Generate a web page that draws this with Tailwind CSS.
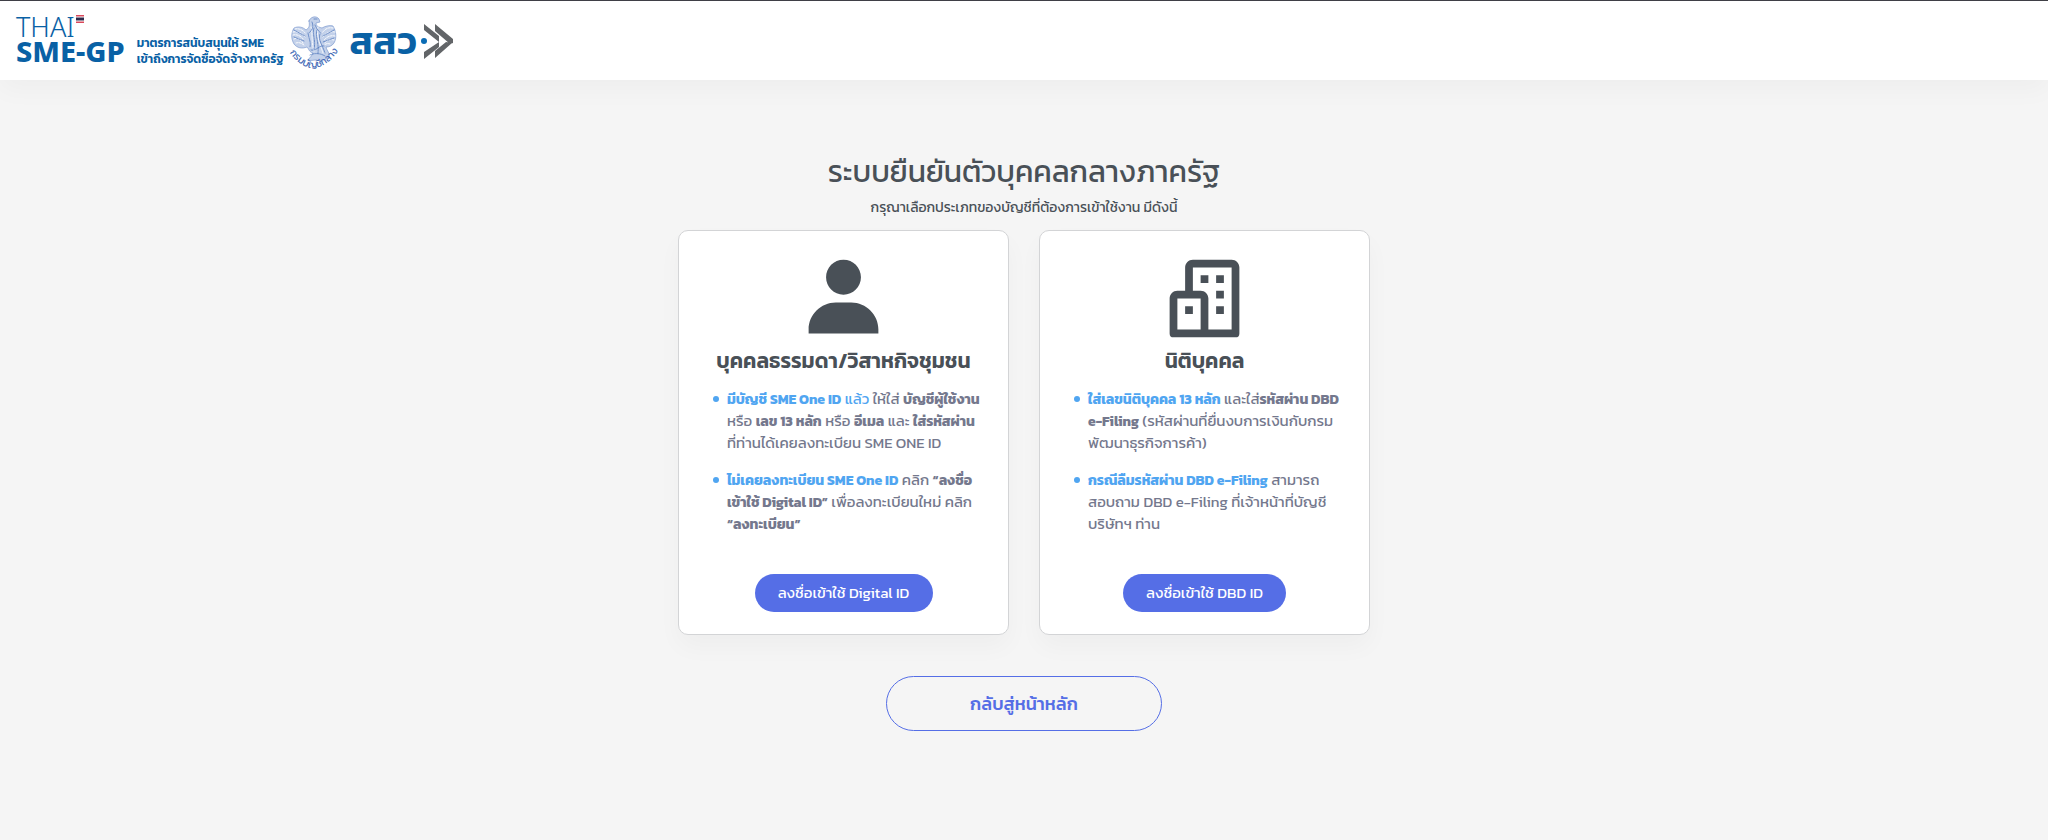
<!DOCTYPE html>
<html lang="th">
<head>
  <meta charset="UTF-8">
  <meta name="viewport" content="width=device-width, initial-scale=1.0">
  <title>THAI SME-GP</title>
  <script src="https://cdn.jsdelivr.net/npm/@tailwindcss/browser@4"></script>
</head>
<body class="min-h-screen bg-[#f5f5f5] font-[Kanit,'Noto_Sans_Thai',Roboto,sans-serif] text-[#495057]">
  <header class="flex h-20 items-center border-t border-[#3f3f46] bg-white pl-4 shadow-[0_10px_24px_rgba(0,0,0,0.03)]">
    <a href="#" class="flex items-end gap-3 text-[#0961a5]">
      <span class="flex flex-col pb-1">
        <span class="flex items-start gap-px">
          <span class="font-['Noto_Sans'] text-[27px] leading-6 font-light">THAI</span>
          <svg class="h-2 w-2" viewBox="0 0 8 8">
            <path fill="#d9485a" d="M0 0h8v8H0z"/>
            <path fill="#fff" d="M0 1.500h8v5H0z"/>
            <path fill="#2d2a4a" d="M0 2.500h8v3H0z"/>
          </svg>
        </span>
        <span class="font-['Noto_Sans'] text-[29px] leading-6 font-extrabold">SME-GP</span>
      </span>
      <span class="text-xs leading-4 font-semibold whitespace-nowrap">มาตรการสนับสนุนให้ SME<br>เข้าถึงการจัดซื้อจัดจ้างภาครัฐ</span>
    </a>
    <a href="#" class="ml-1.5" aria-label="กรมบัญชีกลาง">
      <svg class="h-14 w-12 overflow-visible" viewBox="0 0 48 56" fill="none" stroke="#6f8fc9" stroke-linecap="round">
        <path fill="#c3d1ea" stroke-width="0.6" d="M19 8c1-4 7-6 10-2l1 3-4 1c0 3 2 4 6 5 3-2 8-3 11-2 3 5 4 12 1 17-2 3-5 4-8 4 1 4 4 6 3 10-3 3-9 4-13 3-3 0-5 1-8 0 2-3 4-4 5-7-4-1-4-4-6-6-5 2-10 1-13-3-3-5-3-11 0-16 4-2 9-1 12 2 3-2 4-4 3-9z"/>
        <path stroke="#fff" stroke-width="0.9" stroke-dasharray="2 1.200" d="M5 16c4-1 8 1 11 5M3 19c5-1 9 1 12 5M3 22c4-1 8 1 11 5M4 26c4-2 7 1 9 4M6 30c3-1 5 0 8 2M43 15c-5-1-8 1-11 5M45 19c-5-1-9 1-12 5M45 23c-5-1-8 1-11 4M44 27c-4-1-7 0-9 3M40 31c-3-1-4 0-6 1M21 14c2 8 0 14 3 24M28 14c-2 8 1 14 5 26"/>
        <path stroke="#5279bd" stroke-width="0.8" stroke-dasharray="1.500 1" d="M24 6l3 0M22 9c2 5 0 8-3 11M25 12c2 4 3 6 6 8M18 20c1 6 3 9 2 14M24 15c-2 6 2 12 0 21M27 17c-2 6 2 12 1 23M30 21c-2 6 2 10 5 19M4 17l11 6M4 24l10 4M44 17l-11 6M44 25l-11 4M21 37c6 1 8-5 13-4M20 42c4-2 10-2 15 1"/>
        <path id="arc" stroke="none" d="M-1 39Q24 72 49 37"/>
        <text fill="#3f68b5" stroke="none" font-size="10" text-anchor="middle"><textPath href="#arc" startOffset="50%">กรมบัญชีกลาง</textPath></text>
      </svg>
    </a>
    <a href="#" class="ml-3 flex items-center text-[#0961a5]">
      <span class="text-[38px] leading-10 font-semibold">สสว</span>
      <svg class="ml-1 h-9 w-8" viewBox="0 0 32 36">
        <circle cx="3" cy="18" r="3" fill="#0a6cb5"/>
        <path fill="#626568" d="M3 1l15 12v6L3 7zM14 1l18 15v4l-3 1L14 8zM18 19v5L3 36v-7zM31 20L14 35v-7l11-9z"/>
      </svg>
    </a>
  </header>

  <main class="flex flex-col items-center px-4 pt-[69px] pb-12">
    <h1 class="text-center text-3xl leading-[45px]">ระบบยืนยันตัวบุคคลกลางภาครัฐ</h1>
    <p class="mt-0.5 text-center text-sm leading-6">กรุณาเลือกประเภทของบัญชีที่ต้องการเข้าใช้งาน มีดังนี้</p>

    <div class="mt-2.5 grid w-full max-w-[692px] gap-[30px] md:grid-cols-2">
      <section class="flex flex-col items-center rounded-[10px] border border-[#d3d4d6] bg-white pt-[21px] pb-[22px] shadow-[0_12px_24px_rgba(0,0,0,0.03)]">
        <svg class="size-[93px]" viewBox="0 0 24 24" fill="#495057">
          <path d="M7.500 6.500C7.500 8.981 9.519 11 12 11s4.500-2.019 4.500-4.500S14.481 2 12 2 7.500 4.019 7.500 6.500zM20 21h1v-1c0-3.859-3.141-7-7-7h-4c-3.860 0-7 3.141-7 7v1h17z"/>
        </svg>
        <h2 class="text-[21px] leading-8 font-semibold">บุคคลธรรมดา/วิสาหกิจชุมชน</h2>
        <ul class="mt-[11px] w-full space-y-[15px] pl-[34px] text-[15px] leading-[22px] whitespace-nowrap text-[#74788d]">
          <li class="flex gap-2 before:mt-2 before:size-[6px] before:shrink-0 before:rounded-full before:bg-[#50a5f1]">
            <p><b class="text-sm leading-none font-bold text-[#50a5f1]">มีบัญชี SME One ID</b> <span class="text-[#50a5f1]">แล้ว</span> ให้ใส่ <b class="text-sm leading-none font-bold">บัญชีผู้ใช้งาน</b><br>หรือ <b class="text-sm leading-none font-bold">เลข 13 หลัก</b> หรือ <b class="text-sm leading-none font-bold">อีเมล</b> และ <b class="text-sm leading-none font-bold">ใส่รหัสผ่าน</b><br>ที่ท่านได้เคยลงทะเบียน SME ONE ID</p>
          </li>
          <li class="flex gap-2 before:mt-2 before:size-[6px] before:shrink-0 before:rounded-full before:bg-[#50a5f1]">
            <p><b class="text-sm leading-none font-bold text-[#50a5f1]">ไม่เคยลงทะเบียน SME One ID</b> คลิก <b class="text-sm leading-none font-bold">“ลงชื่อ<br>เข้าใช้ Digital ID”</b> เพื่อลงทะเบียนใหม่ คลิก<br><b class="text-sm leading-none font-bold">“ลงทะเบียน”</b></p>
          </li>
        </ul>
        <button class="mt-[39px] h-[38px] w-[178px] rounded-full bg-[#556ee6] text-[15px] text-white">ลงชื่อเข้าใช้ Digital ID</button>
      </section>

      <section class="flex flex-col items-center rounded-[10px] border border-[#d3d4d6] bg-white pt-[21px] pb-[22px] shadow-[0_12px_24px_rgba(0,0,0,0.03)]">
        <svg class="size-[93px]" viewBox="0 0 24 24" fill="#495057">
          <path d="M19 2H9c-1.103 0-2 .897-2 2v6H5c-1.103 0-2 .897-2 2v9a1 1 0 0 0 1 1h16a1 1 0 0 0 1-1V4c0-1.103-.897-2-2-2zM5 12h6v8H5v-8zm14 8h-6v-8c0-1.103-.897-2-2-2H9V4h10v16z"/>
          <path d="M11 6h2v2h-2zm4 0h2v2h-2zm0 4h2v2h-2zm0 4h2v2h-2zm-8 0h2v2H7z"/>
        </svg>
        <h2 class="text-[21px] leading-8 font-semibold">นิติบุคคล</h2>
        <ul class="mt-[11px] w-full space-y-[15px] pl-[34px] text-[15px] leading-[22px] whitespace-nowrap text-[#74788d]">
          <li class="flex gap-2 before:mt-2 before:size-[6px] before:shrink-0 before:rounded-full before:bg-[#50a5f1]">
            <p><b class="text-sm leading-none font-bold text-[#50a5f1]">ใส่เลขนิติบุคคล 13 หลัก</b> และใส่<b class="text-sm leading-none font-bold">รหัสผ่าน DBD<br>e-Filing</b> (รหัสผ่านที่ยื่นงบการเงินกับกรม<br>พัฒนาธุรกิจการค้า)</p>
          </li>
          <li class="flex gap-2 before:mt-2 before:size-[6px] before:shrink-0 before:rounded-full before:bg-[#50a5f1]">
            <p><b class="text-sm leading-none font-bold text-[#50a5f1]">กรณีลืมรหัสผ่าน DBD e-Filing</b> สามารถ<br>สอบถาม DBD e-Filing ที่เจ้าหน้าที่บัญชี<br>บริษัทฯ ท่าน</p>
          </li>
        </ul>
        <button class="mt-[39px] h-[38px] w-[163px] rounded-full bg-[#556ee6] text-[15px] text-white">ลงชื่อเข้าใช้ DBD ID</button>
      </section>
    </div>

    <a href="#" class="mt-[41px] flex h-[55px] w-[276px] items-center justify-center rounded-full border border-[#556ee6] text-lg font-medium text-[#556ee6]">กลับสู่หน้าหลัก</a>
  </main>
</body>
</html>
